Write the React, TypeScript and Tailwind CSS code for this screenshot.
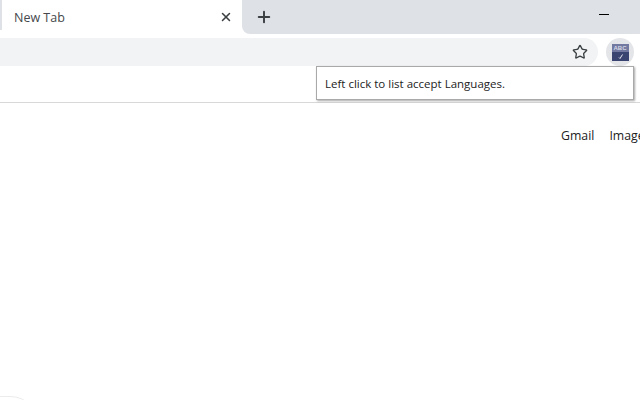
import { Plus, Star, X } from "lucide-react";

const sans = "font-['Open_Sans','Noto_Sans',sans-serif]";

function TabStrip() {
  return (
    <div className="flex h-[38px] shrink-0 bg-white">
      <div className="h-[30px] w-[2px] bg-[#dee1e6]" />
      <div className="flex h-[38px] w-[240px] items-center rounded-t-[8px] bg-white pl-[12px] pr-[9px]">
        <span className="flex-1 pb-[2px] text-[12.5px] text-[#45484c]">New Tab</span>
        <X size={14} strokeWidth={2.6} className="mb-[4px] text-[#3c4043]" />
      </div>
      <div className="flex h-[34px] flex-1 rounded-bl-[8px] bg-[#dee1e6]">
        <div className="flex h-[34px] w-[44px] items-center justify-center">
          <Plus size={18} strokeWidth={2.6} className="text-[#3c4043]" />
        </div>
        <div className="flex flex-1 justify-end pr-[31px] pt-[14px]">
          <div className="h-px w-[10px] bg-black" />
        </div>
      </div>
    </div>
  );
}

function Toolbar() {
  return (
    <div className="flex h-[28px] shrink-0 items-center bg-white">
      <div className="flex h-[28px] flex-1 items-center justify-end rounded-r-[14px] bg-[#f1f3f4] pr-[10px]">
        <Star size={16} strokeWidth={2} className="text-[#3c4043]" />
      </div>
      <div className="ml-[8px] mr-[6px] flex h-[28px] w-[28px] items-center justify-center rounded-full bg-[#e3e5e9]">
        <div className="flex h-[17px] w-[17px] flex-col items-center overflow-hidden bg-[#3a4470]">
          <div className="h-[8px] w-full bg-[#7279a0] text-center font-['Liberation_Sans',sans-serif] text-[6px] font-bold leading-[8px] text-[#d5d8e6]">
            ABC
          </div>
          <svg width="17" height="9" viewBox="0 0 17 9">
            <path d="M7 5.5l1 1 2.5-4" fill="none" stroke="#e8eaf0" strokeWidth="1" />
          </svg>
        </div>
      </div>
    </div>
  );
}

function Bookmarks() {
  return <div className="h-[37px] shrink-0 border-b border-[#d8d8d8] bg-white" />;
}

export default function App() {
  return (
    <div className={`${sans} relative flex h-[400px] w-[640px] flex-col overflow-hidden bg-white`}>
      <TabStrip />
      <Toolbar />
      <Bookmarks />
      <div className="flex flex-1 justify-start overflow-hidden pl-[561px] pt-[24px] text-[12.3px] text-[#222]">
        <span>Gmail</span>
        <span className="ml-[15px] whitespace-nowrap">Images</span>
      </div>
      <div className="absolute left-[316px] top-[66px] flex h-[34px] w-[318px] items-center border border-[#a9a9a9] bg-white pl-[8px] pt-[2px] text-[11.5px] text-[#222] shadow-[1px_1px_2px_rgba(0,0,0,0.35)]">
        Left click to list accept Languages.
      </div>
      <div className="absolute -left-[60px] top-[396px] h-[60px] w-[100px] rounded-[30px] border border-[#ececec]" />
    </div>
  );
}
